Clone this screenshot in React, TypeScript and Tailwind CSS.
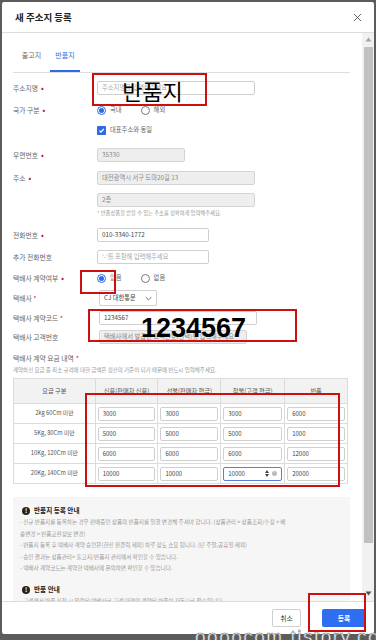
import React from "react";

const FONT = { fontFamily: '"Noto Sans CJK KR", "Noto Sans", sans-serif' };

function Req() {
  return <span className="ml-[3px] text-[#c0121b] text-[8px] leading-none">•</span>;
}

function Field({
  w,
  value,
  placeholder,
  disabled,
}: {
  w: number;
  value?: string;
  placeholder?: string;
  disabled?: boolean;
}) {
  return (
    <div
      className={
        "h-[14px] border rounded-[2px] flex items-center px-[4px] text-[6.3px] whitespace-nowrap overflow-hidden " +
        (disabled ? "bg-[#eeeeee] border-[#d4d4d4] text-[#8a8a8a]" : "bg-white border-[#cfcfcf] text-[#444]")
      }
      style={{ width: w }}
    >
      {value ? value : <span className="text-[#aaa]">{placeholder}</span>}
    </div>
  );
}

function Radio({ checked, label }: { checked?: boolean; label: string }) {
  return (
    <div className="flex items-center gap-[4px]">
      <div
        className={
          "w-[9px] h-[9px] rounded-full border flex items-center justify-center bg-white " +
          (checked ? "border-[#2d6ae3]" : "border-[#777]")
        }
      >
        {checked && <div className="w-[5px] h-[5px] rounded-full bg-[#2d6ae3]" />}
      </div>
      <span className="text-[6.3px] text-[#666]">{label}</span>
    </div>
  );
}

function Row({ label, req, mt, children }: { label?: string; req?: boolean; mt: number; children?: React.ReactNode }) {
  return (
    <div className="flex items-center h-[14px]" style={{ marginTop: mt }}>
      <div className="w-[84px] flex items-center text-[6.8px] text-[#666]">
        {label}
        {req && <Req />}
      </div>
      {children}
    </div>
  );
}

const rates = [
  { name: "2kg 60Cm 미만", v: ["3000", "3000", "3000", "6000"] },
  { name: "5Kg, 80Cm 미만", v: ["5000", "5000", "5000", "1000"] },
  { name: "10Kg, 120Cm 미만", v: ["6000", "6000", "6000", "12000"] },
  { name: "20Kg, 140Cm 미만", v: ["10000", "10000", "10000", "20000"] },
];

const notes = [
  "- 신규 반품지를 등록하는 경우 판매중인 상품의 반품지를 일괄 변경해 주셔야 합니다. (상품관리 > 상품조회/수정 > 배",
  "송변경 > 반품교환정보 변경)",
  "- 반품지 등록 후 택배사 계약 승인은(한진 원클릭 제외) 하루 정도 소요 됩니다. (단 주말,공휴일 제외)",
  "- 승인 결과는 상품관리> 출고지/반품지 관리에서 확인할 수 있습니다.",
  "- 택배사 계약코드는 계약한 택배사에 문의하면 확인할 수 있습니다.",
];

function InfoIcon() {
  return (
    <div className="w-[8px] h-[8px] rounded-full bg-[#222] flex items-center justify-center text-white text-[6px] font-bold leading-none">
      !
    </div>
  );
}

export default function App() {
  return (
    <div className="w-[376px] h-[640px] bg-[#5c5c5c] relative overflow-hidden" style={FONT}>
      <div className="absolute left-[2px] top-[2px] w-[372px] h-[632px] bg-white flex flex-col rounded-[2px]">
        {/* header */}
        <div className="h-[31px] shrink-0 border-b border-[#dcdcdc] flex items-center justify-between pl-[13px] pr-[12px]">
          <span className="text-[9.5px] font-bold text-[#222]">새 주소지 등록</span>
          <svg width="9" height="9" viewBox="0 0 10 10">
            <path d="M1 1l8 8M9 1l-8 8" stroke="#555" strokeWidth="1" />
          </svg>
        </div>

        {/* body */}
        <div className="flex flex-1 min-h-0">
          <div className="flex-1 overflow-hidden pl-[11px] pr-[12px]">
            {/* tabs */}
            <div className="mt-[15px] flex border-b border-[#dedede] h-[25px] text-[7px]">
              <div className="w-[37px] text-[#666] flex justify-center pt-[2px]">출고지</div>
              <div className="w-[30px] text-[#2d6ae3] border-b-[2px] border-[#2d6ae3] flex justify-center pt-[2px]">
                반품지
              </div>
            </div>

            <Row label="주소지명" req mt={8}>
              <Field w={158} placeholder="주소지명을 입력해주세요" />
            </Row>
            <Row label="국가 구분" req mt={8}>
              <div className="flex gap-[19px]">
                <Radio checked label="국내" />
                <Radio label="해외" />
              </div>
            </Row>
            <Row mt={6}>
              <div className="flex items-center gap-[4px]">
                <div className="w-[9px] h-[9px] rounded-[1px] bg-[#2d6ae3] flex items-center justify-center">
                  <svg width="7" height="7" viewBox="0 0 10 10">
                    <path d="M2 5.2 4.2 7.3 8.2 2.8" stroke="#fff" strokeWidth="1.8" fill="none" />
                  </svg>
                </div>
                <span className="text-[6.3px] text-[#666]">대표주소와 동일</span>
              </div>
            </Row>
            <Row label="우편번호" req mt={11}>
              <Field w={88} value="35330" disabled />
            </Row>
            <Row label="주소" req mt={9}>
              <Field w={158} value="대전광역시 서구 도마20길 13" disabled />
            </Row>
            <Row mt={8}>
              <Field w={158} value="2층" disabled />
            </Row>
            <div className="ml-[84px] mt-[2px] h-[9px] text-[5.3px] text-[#999] flex items-center">
              * 반품상품을 받을 수 있는 주소를 정확하게 입력해주세요.
            </div>
            <Row label="전화번호" req mt={10}>
              <Field w={112} value="010-3340-1772" />
            </Row>
            <Row label="추가 전화번호" mt={8}>
              <Field w={112} placeholder="'-'를 포함해 입력해주세요" />
            </Row>
            <Row label="택배사 계약여부" req mt={7}>
              <div className="flex gap-[19px]">
                <Radio checked label="있음" />
                <Radio label="없음" />
              </div>
            </Row>
            <div className="flex items-center h-[16px] mt-[5px]">
              <div className="w-[86px] text-[6.8px] text-[#666]">
                택배사 <span className="text-[#c0121b]">*</span>
              </div>
              <div className="w-[58px] h-[16px] border border-[#cfcfcf] rounded-[2px] flex items-center justify-between px-[4px] text-[6.3px] text-[#444]">
                CJ 대한통운
                <svg width="7" height="5" viewBox="0 0 10 6">
                  <path d="M1 1l4 4 4-4" stroke="#555" strokeWidth="1.2" fill="none" />
                </svg>
              </div>
            </div>
            <div className="flex items-center h-[14px] mt-[5px]">
              <div className="w-[86px] text-[6.8px] text-[#666]">
                택배사 계약코드 <span className="text-[#c0121b]">*</span>
              </div>
              <Field w={158} value="1234567" />
            </div>
            <div className="flex items-center h-[14px] mt-[5px]">
              <div className="w-[86px] text-[6.8px] text-[#666]">택배사 고객번호</div>
              <Field w={148} value="택배사에서 발급한 고객번호(선택)를 입력해주세요" disabled />
            </div>
            <div className="mt-[7px] h-[14px] flex items-center text-[6.8px] text-[#666]">
              택배사 계약 요금 내역 <span className="ml-[2px] text-[#c0121b]">*</span>
            </div>
            <div className="mt-[1px] h-[9px] flex items-center text-[5.5px] text-[#999]">
              계약하신 요금 중 최소 규격에 대한 금액은 정산의 기준이 되기 때문에 반드시 입력해주세요.
            </div>

            {/* rate table */}
            <table className="mt-[3px] w-[335px] border-collapse text-[6.2px] text-[#555]">
              <thead>
                <tr className="h-[25px] bg-[#f2f2f2]">
                  <th className="w-[82px] border border-[#dcdcdc] font-normal">요금 구분</th>
                  <th className="w-[63px] border border-[#dcdcdc] font-normal">신용(판매자 신용)</th>
                  <th className="w-[63px] border border-[#dcdcdc] font-normal">선불(판매자 현금)</th>
                  <th className="w-[64px] border border-[#dcdcdc] font-normal">착불(고객 현금)</th>
                  <th className="w-[63px] border border-[#dcdcdc] font-normal">반품</th>
                </tr>
              </thead>
              <tbody>
                {rates.map((r, ri) => (
                  <tr key={r.name} className="h-[20px]">
                    <td className="border border-[#dcdcdc] text-center text-[5.8px]">{r.name}</td>
                    {r.v.map((v, ci) => {
                      const focus = ri === 3 && ci === 2;
                      return (
                        <td key={ci} className="border border-[#dcdcdc] px-[2px]">
                          <div
                            className={
                              "h-[14px] rounded-[2px] border flex items-center justify-between px-[4px] text-[6px] text-[#444] " +
                              (focus ? "border-[#5b7fd6]" : "border-[#cfcfcf]")
                            }
                          >
                            {v}
                            {focus && (
                              <span className="flex items-center gap-[3px]">
                                <svg width="4" height="7" viewBox="0 0 4 7">
                                  <path d="M2 0 4 3H0zM2 7 0 4h4z" fill="#444" />
                                </svg>
                                <span className="w-[5px] h-[5px] rounded-full bg-[#bbb]" />
                              </span>
                            )}
                          </div>
                        </td>
                      );
                    })}
                  </tr>
                ))}
              </tbody>
            </table>

            {/* guide */}
            <div className="mt-[13px] bg-[#f6f6f6] px-[7px] pt-[9px] pb-[8px] text-[5.6px] text-[#9a9a9a]">
              <div className="flex items-center gap-[4px] text-[6.6px] text-[#222] font-bold h-[10px] ml-[2px]">
                <InfoIcon />
                반품지 등록 안내
              </div>
              <div className="mt-[1px] leading-[11.5px]">
                {notes.map((n) => (
                  <div key={n} className="whitespace-nowrap">
                    {n}
                  </div>
                ))}
              </div>
              <div className="mt-[10px] flex items-center gap-[4px] text-[6.6px] text-[#222] font-bold h-[10px] ml-[2px]">
                <InfoIcon />
                반품 안내
              </div>
              <div className="mt-[1px] leading-[11.5px] whitespace-nowrap">
                - 고객께서 반품 신청 시 입력된 택배사로 고객 대행의 계약된 반품이 자동으로 접수됩니다.
              </div>
            </div>
          </div>

          {/* scrollbar */}
          <div className="w-[12px] shrink-0 bg-[#f1f1f1] flex flex-col items-center">
            <svg className="mt-[4px]" width="7" height="5" viewBox="0 0 7 5">
              <path d="M3.5 0.5 6.5 4.5H0.5z" fill="#a3a3a3" />
            </svg>
            <div className="mt-[5px] w-[9px] h-[496px] bg-[#c1c1c1]" />
            <div className="flex-1" />
            <svg className="mb-[5px]" width="7" height="5" viewBox="0 0 7 5">
              <path d="M0.5 0.5h6L3.5 4.5z" fill="#505050" />
            </svg>
          </div>
        </div>

        {/* footer */}
        <div className="h-[33px] shrink-0 border-t border-[#dcdcdc] flex items-center justify-end gap-[21px] pr-[8px]">
          <div className="w-[29px] h-[18px] border border-[#cfcfcf] rounded-[2px] flex items-center justify-center text-[6.8px] text-[#333]">
            취소
          </div>
          <div className="w-[44px] h-[18px] bg-[#2f6ef0] rounded-[2px] flex items-center justify-center text-[6.8px] text-white font-bold">
            등록
          </div>
        </div>
      </div>

      {/* watermark */}
      <div
        className="absolute left-[195px] top-[627px] text-[19px] tracking-[1.5px] text-white leading-none [-webkit-text-stroke:0.5px_#666]"
        style={{ fontFamily: '"Liberation Sans", sans-serif' }}
      >
        oooocom.tistory.com
      </div>

      {/* annotation boxes */}
      <div className="absolute left-[92px] top-[73px] w-[115px] h-[33px] border-[2px] border-[#cc1010] flex items-center justify-center">
        <span className="text-[22px] leading-none text-black pl-[6px]" style={FONT}>반품지</span>
      </div>
      <div className="absolute left-[80px] top-[270px] w-[36px] h-[24px] border-[2px] border-[#cc1010]" />
      <div className="absolute left-[88px] top-[309px] w-[209px] h-[33px] border-[2px] border-[#cc1010] flex items-center">
        <span
          className="ml-[51px] mt-[5px] text-[27px] font-bold leading-none text-black"
          style={{ fontFamily: '"Liberation Sans", sans-serif' }}
        >
          1234567
        </span>
      </div>
      <div className="absolute left-[85px] top-[393px] w-[255px] h-[94px] border-[2px] border-[#cc1010]" />
      <div className="absolute left-[308px] top-[593px] w-[58px] h-[39px] border-[2px] border-[#cc1010]" />
    </div>
  );
}
